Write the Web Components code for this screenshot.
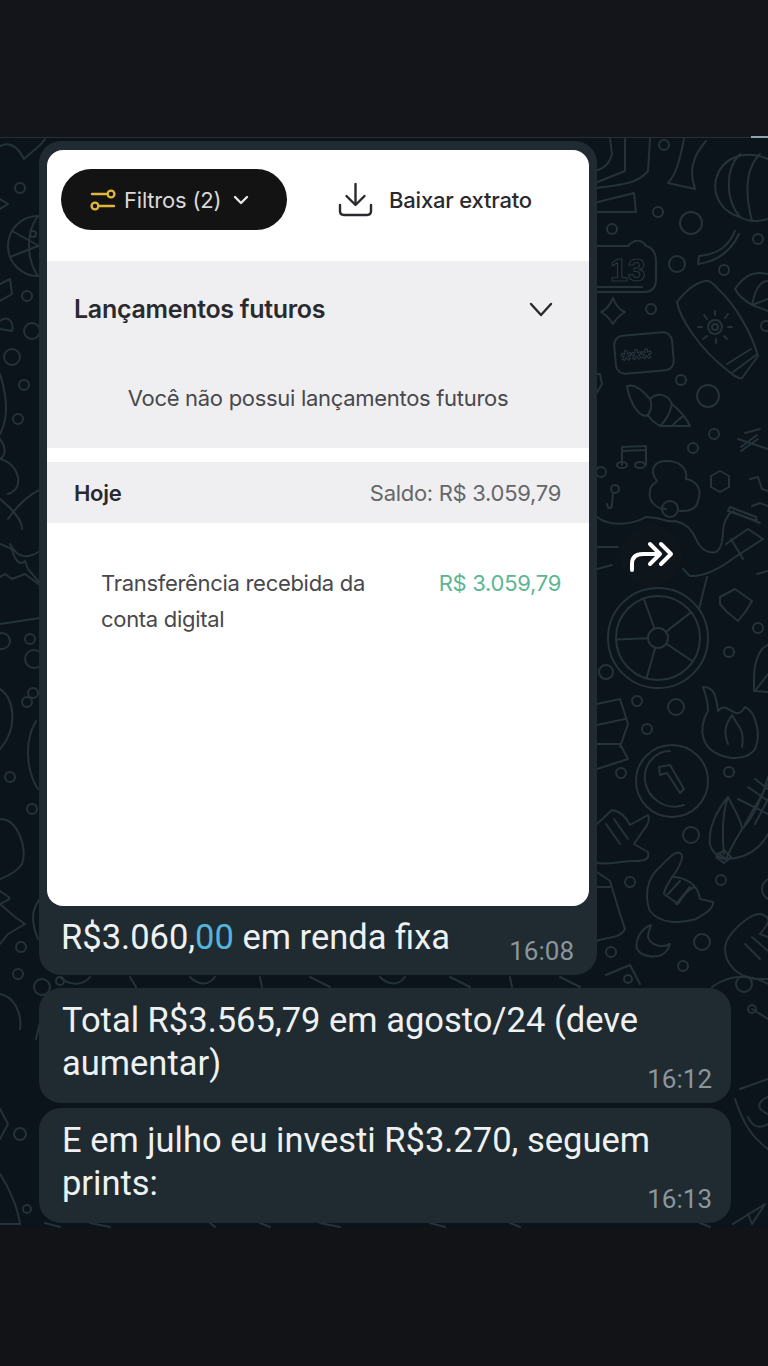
<!DOCTYPE html>
<html lang="pt-BR">
<head>
<meta charset="utf-8">
<title>Conversa</title>
<style>
  html, body { margin: 0; padding: 0; background: #121316; }
</style>
</head>
<body>
<chat-screen>
  <statement-bubble time="16:08"></statement-bubble>
  <chat-bubble time="16:12">Total R$3.565,79 em agosto/24 (deve aumentar)</chat-bubble>
  <chat-bubble time="16:13">E em julho eu investi R$3.270, seguem prints:</chat-bubble>
</chat-screen>

<script>
class ChatScreen extends HTMLElement {
  connectedCallback() {
    this.attachShadow({ mode: 'open' });
    this.shadowRoot.innerHTML = `
      <style>
        :host { display: flex; flex-direction: column; width: 768px; height: 1366px; overflow: hidden; background: #121316; }
        .top { height: 137px; background: #14151a; }
        .bottom { flex: 1; background: #121316; }
        .chat {
          position: relative;
          height: 1091px;
          box-sizing: border-box;
          padding: 3px 37px 6px 39px;
          display: flex;
          flex-direction: column;
          align-items: flex-start;
          background: #0a141a;
          border-top: 1px solid #22303a;
        }
        .stack { position: relative; display: flex; flex-direction: column; align-items: flex-start; gap: 5px; width: 100%; }
        ::slotted(statement-bubble) { margin-bottom: 8px; }
        .mark { position: absolute; top: -2px; right: 0; width: 17px; height: 2px; background: #8ea3ad; }
      </style>
      <div class="top"></div>
      <div class="chat">
        <chat-wallpaper></chat-wallpaper>
        <div class="mark"></div>
        <forward-button></forward-button>
        <div class="stack"><slot></slot></div>
      </div>
      <div class="bottom"></div>
    `;
  }
}

class ChatWallpaper extends HTMLElement {
  connectedCallback() {
    this.attachShadow({ mode: 'open' });
    // doodles, coords are page coords (chat starts at y=138)
    const dots = [
      [664,146,5],[658,213,5],[691,224,11],[612,230,5],[677,265,8],[724,271,5],[758,240,5],[651,310,5],[681,381,5],[708,397,11],[766,327,5],
      [693,449,5],[714,435,5],[601,473,5],[758,629,5],[729,653,5],[637,702,5],[676,708,8],[606,673,7],
      [647,730,5],[621,774,5],[729,773,5],[691,836,8],[721,881,5],[630,883,5],[702,943,8],[683,967,5],[611,953,5],
      [20,189,5],[27,297,5],[12,358,8],[24,386,5],[18,420,5],[32,332,8],[30,640,5],[2,642,8],[27,703,5],[10,778,5],[32,810,5],[21,948,5],[18,975,5],[42,988,8],
      [33,694,5],[34,660,9],[20,1135,6],[27,1210,4],[744,985,8],[752,1010,4],[628,980,4],[60,982,4]
    ].map(([x, y, r]) => `<circle cx="${x}" cy="${y}" r="${r}"/>`).join('');
    const spokes = [-20, 52, 124, 196, 268].map(a => {
      const t = a * Math.PI / 180;
      return `M${658 + 10 * Math.sin(t)} ${639 - 10 * Math.cos(t)}L${658 + 42 * Math.sin(t)} ${639 - 42 * Math.cos(t)}`;
    }).join('');
    this.shadowRoot.innerHTML = `
      <style>
        :host { position: absolute; inset: 0; display: block; }
        svg { position: absolute; left: 0; top: -1px; width: 768px; height: 1091px; filter: blur(.5px); }
        .d { fill: none; stroke: #25323a; stroke-width: 2; stroke-linecap: round; stroke-linejoin: round; }
        text { fill: none; stroke: #2a3840; stroke-width: 1; font-family: "Liberation Sans", sans-serif; font-weight: 700; }
      </style>
      <svg viewBox="0 138 768 1091" aria-hidden="true">
        <g class="d">
          ${dots}
          <!-- top right lantern -->
          <path d="M768 160C745 150 722 158 716 180C712 200 725 214 740 218C750 224 760 222 768 220M740 155C725 170 725 200 740 218M760 155C745 170 745 195 752 222"/>
          <path d="M735 232C728 248 718 255 699 257L698 265C720 262 732 250 739 235"/>
          <!-- top shapes -->
          <path d="M590 190C610 186 635 188 648 172L650 140M590 205L634 194L636 213L590 213M610 140L612 155C608 170 598 172 590 172M625 140V172L590 186"/>
          <path d="M668 184C676 176 680 160 684 140M668 184L695 190C690 175 690 160 706 142"/>
          <!-- clock 13 -->
          <path d="M597 247H628C634 240 642 240 646 247C652 248 656 254 656 262V280C656 288 652 293 644 293H597M597 288H642"/>
          <text x="610" y="282" font-size="32">13</text>
          <path d="M613 299C616 308 620 311 625 313C620 316 616 320 613 325C610 320 606 316 601 313C606 311 610 306 613 299Z"/>
          <!-- sky lantern -->
          <path d="M705 282C694 284 684 294 677 303C680 320 700 350 727 371C734 377 738 380 742 379L758 357C752 335 735 305 718 290C714 285 709 281 705 282Z"/>
          <path d="M727 365L751 350M733 373L756 356"/>
          <circle cx="715" cy="328" r="7"/><circle cx="715" cy="328" r="3"/>
          <path d="M715 312V316M704 316L707 320M698 328H702M703 340L707 337M716 344V340M727 340L724 337M732 328H728M728 315L725 319"/>
          <!-- tag *** -->
          <rect x="615" y="335" width="58" height="38" rx="9" transform="rotate(-5 644 354)"/>
          <text x="621" y="368" font-size="26" transform="rotate(-5 644 354)">***</text>
          <!-- shell -->
          <path d="M627 387C636 384 645 394 650 400C658 393 668 395 672 405C678 410 686 418 690 427H660C655 424 650 420 648 416C640 420 630 405 627 387Z"/>
          <path d="M648 416C652 410 652 405 650 400M660 427C668 420 670 412 672 405M672 427C676 422 680 420 683 417"/>
          <path d="M590 375H600L602 385L596 395L590 400"/>
          <path d="M735 290C745 275 755 272 768 275M768 300L752 306C742 300 738 296 735 290M768 282C760 282 755 290 752 306L768 312"/>
          <!-- music -->
          <path d="M622 466V448L646 447V466M622 452L646 451"/>
          <ellipse cx="622" cy="466" rx="5" ry="3"/><ellipse cx="640" cy="466" rx="5" ry="3"/>
          <circle cx="615" cy="490" r="4"/><path d="M612 505L613 495M607 505C608 511 612 510 612 505"/>
          <path d="M720 472L729 477V488L720 493L711 488V477Z"/>
          <path d="M745 434L760 430M741 448L757 436M741 452L758 440"/>
          <path d="M750 480L758 478L762 490L768 492M752 507L760 504L768 507"/>
          <!-- person -->
          <path d="M666 510C654 510 648 500 650 492C650 485 655 485 657 482C648 470 655 462 667 462C680 462 688 470 686 480C698 482 702 492 698 502C696 512 686 512 680 512"/>
          <circle cx="670" cy="510" r="8"/>
          <path d="M597 518C610 528 632 526 646 518C660 518 668 524 675 522C688 525 692 532 696 540C700 550 708 555 716 553C724 548 722 535 724 525C728 515 732 510 735 514L760 524"/>
          <path d="M726 545L748 530L763 540L735 558C722 568 705 578 690 577L683 570M731 540L743 560M728 512L757 522L756 518L730 508Z"/>
          <path d="M707 578L699 610M597 570L612 566M597 548H618"/>
          <!-- wheel -->
          <circle cx="658" cy="639" r="50"/><circle cx="658" cy="639" r="42"/><circle cx="658" cy="639" r="10"/>
          <path d="${spokes}"/>
          <path d="M738 440L768 450M757 575L768 572M720 598L735 590L742 595L752 602L746 612L738 622L726 612L720 605L720 598Z"/>
          <path d="M768 646C758 650 754 665 754 680V692L768 693M768 675L755 692"/>
          <!-- flame -->
          <path d="M703 688C716 688 716 700 718 712C728 700 735 725 745 708C755 712 762 735 755 750C745 765 715 760 706 745C700 735 702 722 708 712C708 700 705 695 703 688Z"/>
          <path d="M728 745C722 730 728 722 732 716C738 728 745 730 742 748"/>
          <path d="M597 705L620 700L628 725L620 748M597 726L625 720M597 745L620 745L628 760L597 770"/>
          <!-- timer -->
          <circle cx="672" cy="782" r="36"/>
          <path d="M684 806C666 812 648 800 645 782C643 766 655 752 670 752"/>
          <path d="M659 768L670 766L684 790L680 794L667 774L660 776Z"/>
          <!-- corn -->
          <path d="M728 798C716 812 708 830 710 846C712 852 718 860 726 860L718 854M728 798C735 812 742 822 742 830C752 820 762 800 768 778M728 798C722 815 722 835 724 855M726 860C745 860 760 850 768 835M742 830C735 842 730 850 726 860"/>
          <path d="M738 800L768 815M748 788L768 802M755 780L768 790M745 825L768 785M755 825L768 800"/>
          <path d="M716 858L724 851L731 858L724 864Z"/>
          <!-- hand 1 -->
          <path d="M597 825L612 811C620 812 626 818 630 826L648 816C650 820 648 826 643 832L634 845L648 853C650 860 645 862 635 862C620 862 608 866 597 864"/>
          <path d="M606 825L620 845M614 820L628 840"/>
          <!-- hand 2 -->
          <path d="M680 854C685 856 680 868 672 878C685 878 698 885 700 900L713 903C714 910 704 915 696 920C680 925 660 925 650 912C645 900 645 880 660 868C668 860 674 852 680 854Z"/>
          <path d="M672 878C668 885 664 890 664 895L678 905C684 895 690 890 694 888M680 882L668 895M690 888L676 905"/>
          <!-- hand 3 -->
          <path d="M765 917C772 920 768 925 760 935L768 938M725 950C725 940 735 928 750 918C758 914 762 914 765 917M725 950C725 965 738 978 755 980H768"/>
          <path d="M745 945L760 960M752 938L768 952"/>
          <!-- moon -->
          <path d="M651 926C640 930 635 942 637 950C642 958 660 962 668 950L670 945C660 950 650 945 648 938C648 933 650 930 651 926Z"/>
          <path d="M597 873L610 882L620 915L625 930C620 940 605 938 597 942M597 888H610"/>
          <path d="M768 880C760 885 760 895 768 900"/>
          <!-- strip between bubbles -->
          <path d="M606 976L630 966L640 985M712 988C730 975 750 975 768 985M60 978C70 988 84 986 90 978M130 978L136 988M190 978C200 988 210 985 215 978M260 978L262 988M310 978L330 988M380 978C390 988 400 985 405 978M450 978L470 988M510 978L512 988M560 978L580 988"/>
          <!-- left side -->
          <path d="M0 147C10 142 18 148 24 160C32 152 38 150 45 140M0 210L8 205L0 200"/>
          <circle cx="38" cy="247" r="30"/><path d="M38 217C26 232 26 260 38 277M12 232L48 252M10 258L38 247"/><circle cx="33" cy="235" r="3"/>
          <path d="M0 285L10 280L12 295L0 302M0 322C10 315 14 325 12 332L0 330"/>
          <path d="M0 375C8 400 8 420 0 435M0 440C4 445 8 455 0 460M0 460C20 465 25 490 8 495M8 520C18 505 35 490 45 490M0 500C12 510 22 520 22 530"/>
          <path d="M0 545L12 550C14 560 20 568 25 562L28 570L45 590L25 575L12 580L5 575L0 578M0 625C20 622 35 620 45 618M10 545C18 560 28 560 40 552"/>
          <path d="M0 690C15 700 18 730 0 750M36 722C25 740 25 770 38 790M0 820C18 820 28 850 22 865C15 875 5 878 0 880M0 892C10 900 15 898 0 905"/>
          <path d="M0 905L15 918L25 925L8 935L0 945M40 900C30 912 32 925 38 940M0 995C15 998 22 1015 20 1030M42 1015L36 1040"/>
          <!-- right low -->
          <path d="M752 1010L768 1020M740 1090L768 1080M735 1100C745 1130 755 1140 768 1150M748 1118C752 1128 760 1130 768 1125M768 1098C758 1102 755 1110 768 1115M733 1225L765 1205L752 1225L748 1215"/>
          <path d="M0 1175C10 1190 18 1210 20 1225H0M0 1110L8 1125L0 1140"/>
          <path d="M45 1224L60 1228M90 1224L110 1228M210 1224L215 1228M260 1224L270 1228M320 1224L340 1228M430 1224L445 1228M510 1224L520 1228M700 1224L710 1228"/>
        </g>
      </svg>
    `;
  }
}

class ForwardButton extends HTMLElement {
  connectedCallback() {
    this.attachShadow({ mode: 'open' });
    this.shadowRoot.innerHTML = `
      <style>
        :host {
          position: absolute;
          left: 620px;
          top: 387px;
          width: 62px;
          height: 62px;
          border-radius: 50%;
          background: #0e161b;
          display: flex;
          align-items: center;
          justify-content: center;
        }
        svg { width: 46px; height: 34px; margin-left: 2px; }
      </style>
      <svg viewBox="0 0 46 34" fill="none" stroke="#fff" stroke-width="4" stroke-linecap="round" stroke-linejoin="round">
        <path d="M3 31V25C3 18 7 15 14 15H28"/>
        <path d="M21 5L31 15L21 25"/>
        <path d="M32 5L42 15L32 25"/>
      </svg>
    `;
  }
}

class ChatBubble extends HTMLElement {
  connectedCallback() {
    this.attachShadow({ mode: 'open' });
    this.shadowRoot.innerHTML = `
      <style>
        :host {
          position: relative;
          display: block;
          box-sizing: border-box;
          width: 692px;
          height: 115px;
          padding: 11px 22px 0 23px;
          border-radius: 22px;
          background: #202a31;
          font: 400 34.5px/43px Roboto, sans-serif;
          color: #eef1f2;
        }
        .time { position: absolute; right: 19px; bottom: 9px; font: 400 26px/30px Roboto, sans-serif; color: #8b969c; }
      </style>
      <slot></slot><span class="time">${this.getAttribute('time')}</span>
    `;
  }
}

class StatementBubble extends HTMLElement {
  connectedCallback() {
    this.attachShadow({ mode: 'open' });
    this.shadowRoot.innerHTML = `
      <style>
        :host {
          position: relative;
          display: block;
          box-sizing: border-box;
          width: 558px;
          padding: 9px 8px 0;
          border-radius: 22px;
          background: #202a31;
        }
        .caption {
          height: 69px;
          padding: 10px 0 0 14px;
          box-sizing: border-box;
          font: 400 34.5px/43px Roboto, sans-serif;
          color: #eef1f2;
        }
        .caption b { font-weight: 400; color: #53b5dc; }
        .time { position: absolute; right: 23px; bottom: 9px; font: 400 26px/30px Roboto, sans-serif; color: #8b969c; }
      </style>
      <statement-card></statement-card>
      <div class="caption">R$3.060,<b>00</b> em renda fixa</div>
      <span class="time">${this.getAttribute('time')}</span>
    `;
  }
}

class StatementCard extends HTMLElement {
  connectedCallback() {
    this.attachShadow({ mode: 'open' });
    this.shadowRoot.innerHTML = `
      <style>
        :host {
          display: block;
          height: 756px;
          border-radius: 16px;
          overflow: hidden;
          background: #fff;
          font-family: Inter, "Noto Sans", sans-serif;
          color: #2a2a2e;
        }
        .toolbar { height: 111px; box-sizing: border-box; padding: 19px 0 0 14px; display: flex; align-items: flex-start; }
        .pill {
          width: 226px;
          height: 61px;
          box-sizing: border-box;
          padding-left: 29px;
          border-radius: 31px;
          background: #131313;
          color: #d9d9d9;
          display: flex;
          align-items: center;
          font-size: 22px;
          letter-spacing: -.2px;
        }
        .pill .label { margin: 0 12px 0 8px; }
        .download { margin-left: 51px; height: 61px; display: flex; align-items: center; gap: 16px; font-size: 22px; font-weight: 500; letter-spacing: -.2px; }
        .future { height: 187px; background: #efeff1; box-sizing: border-box; padding: 0 36px 0 27px; }
        .future-head { height: 96px; display: flex; align-items: center; justify-content: space-between; font-size: 25px; font-weight: 600; letter-spacing: -.3px; }
        .future-empty { text-align: center; margin: 0 -9px 0 0; padding-top: 26px; font-size: 22px; color: #48484c; letter-spacing: -.3px; line-height: 30px; }
        .today {
          margin-top: 14px;
          height: 61px;
          background: #efeff1;
          box-sizing: border-box;
          padding: 0 28px 0 27px;
          display: flex;
          align-items: center;
          justify-content: space-between;
          font-size: 22px;
          letter-spacing: -.3px;
        }
        .today b { font-weight: 600; }
        .today span { color: #66666a; }
        .entry { padding: 42px 28px 0 54px; display: flex; justify-content: space-between; font-size: 22px; line-height: 36px; letter-spacing: -.3px; color: #48484c; }
        .entry .desc { width: 300px; }
        .entry .value { color: #5cb593; }
      </style>
      <div class="toolbar">
        <div class="pill">
          <svg width="26" height="26" viewBox="0 0 26 26" fill="none" stroke="#e0b73c" stroke-width="2.4" stroke-linecap="round">
            <path d="M2 7H16"/><circle cx="21" cy="7" r="3.4"/>
            <path d="M24 19H10"/><circle cx="5" cy="19" r="3.4"/>
          </svg>
          <span class="label">Filtros (2)</span>
          <svg width="16" height="10" viewBox="0 0 16 10" fill="none" stroke="#e6e6e6" stroke-width="2.4" stroke-linecap="round" stroke-linejoin="round"><path d="M2 2L8 8L14 2"/></svg>
        </div>
        <div class="download">
          <svg width="35" height="35" viewBox="0 0 35 35" fill="none" stroke="#2a2a2e" stroke-width="2.4" stroke-linecap="round" stroke-linejoin="round">
            <path d="M17.5 2V22"/><path d="M8.5 14L17.5 23L26.5 14"/>
            <path d="M2 23V29C2 31.5 3.5 33 6 33H29C31.5 33 33 31.5 33 29V23"/>
          </svg>
          <span>Baixar extrato</span>
        </div>
      </div>
      <div class="future">
        <div class="future-head">
          <span>Lançamentos futuros</span>
          <svg width="24" height="15" viewBox="0 0 24 15" fill="none" stroke="#2a2a2e" stroke-width="2.4" stroke-linecap="round" stroke-linejoin="round"><path d="M2 2L12 13L22 2"/></svg>
        </div>
        <div class="future-empty">Você não possui lançamentos futuros</div>
      </div>
      <div class="today"><b>Hoje</b><span>Saldo: R$ 3.059,79</span></div>
      <div class="entry">
        <div class="desc">Transferência recebida da conta digital</div>
        <div class="value">R$ 3.059,79</div>
      </div>
    `;
  }
}

customElements.define('chat-screen', ChatScreen);
customElements.define('chat-wallpaper', ChatWallpaper);
customElements.define('forward-button', ForwardButton);
customElements.define('chat-bubble', ChatBubble);
customElements.define('statement-bubble', StatementBubble);
customElements.define('statement-card', StatementCard);
</script>
</body>
</html>
